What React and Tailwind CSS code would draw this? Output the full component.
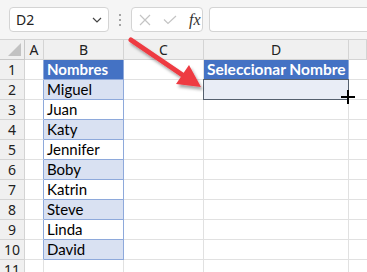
import React from 'react'

const names = ['Miguel', 'Juan', 'Katy', 'Jennifer', 'Boby', 'Katrin', 'Steve', 'Linda', 'David']

const cellFont = { fontFamily: 'Lato, "Noto Sans", sans-serif' }
const uiFont = { fontFamily: '"Noto Sans", "Open Sans", sans-serif' }

function Toolbar() {
  return (
    <div className="h-[39px] flex items-center bg-[#f5f5f5]" style={uiFont}>
      <div className="ml-[9px] w-[100px] h-[25px] bg-white border border-[#d4d4d4] rounded-[4px] flex items-center justify-between pl-[6px] pr-[6px]">
        <span className="text-[14px] text-[#222]">D2</span>
        <svg width="10" height="6" viewBox="0 0 10 6">
          <path d="M1 1 L5 5 L9 1" fill="none" stroke="#444" strokeWidth="1.2" />
        </svg>
      </div>
      <div className="w-[22px] flex flex-col items-center gap-[3px]">
        <span className="w-[2px] h-[2px] bg-[#888] rounded-full" />
        <span className="w-[2px] h-[2px] bg-[#888] rounded-full" />
        <span className="w-[2px] h-[2px] bg-[#888] rounded-full" />
      </div>
      <div className="w-[72px] h-[25px] bg-white border border-[#d4d4d4] rounded-[4px] flex items-center pl-[7px] gap-[12px]">
        <svg width="12" height="12" viewBox="0 0 12 12">
          <path d="M1 1 L11 11 M11 1 L1 11" stroke="#c4c4c4" strokeWidth="1.2" />
        </svg>
        <svg width="14" height="10" viewBox="0 0 14 10">
          <path d="M1 4.5 L5 8.5 L13 1" fill="none" stroke="#c4c4c4" strokeWidth="1.2" />
        </svg>
        <span className="text-[16px] italic text-[#333] leading-none" style={{ fontFamily: '"Liberation Serif", serif' }}>fx</span>
      </div>
      <div className="ml-[6px] flex-1 h-[25px] bg-white border border-[#d4d4d4] rounded-l-[4px] border-r-0" />
    </div>
  )
}

function Sheet() {
  const cols = ['A', 'B', 'C', 'D', '']
  const rows = Array.from({ length: 11 }, (_, i) => i + 1)
  return (
    <div className="grid grid-cols-[25px_19px_80px_80px_145px_1fr] auto-rows-[20px] border-t border-[#d4d4d4]">
      <div className="bg-[#f0f0f0] border-r border-b border-[#c8c8c8] relative">
        <svg className="absolute right-[3px] bottom-[3px]" width="13" height="13" viewBox="0 0 13 13">
          <path d="M13 0 L13 13 L0 13 Z" fill="#c2c2c2" />
        </svg>
      </div>
      {cols.map((c, i) => (
        <div key={i} className="bg-[#f0f0f0] border-r border-b border-[#d4d4d4] flex items-center justify-center text-[14px] text-[#222]" style={uiFont}>
          {c}
        </div>
      ))}
      {rows.map((r) => {
        const nameIdx = r - 2
        const even = r % 2 === 0
        let bCell
        if (r === 1) {
          bCell = (
            <div className="bg-[#4472c4] text-white font-bold border-r border-b border-[#8ea9db] pl-[3px] flex items-center text-[15px]" style={cellFont}>
              Nombres
            </div>
          )
        } else if (r <= 10) {
          bCell = (
            <div className={`${even ? 'bg-[#d9e1f2]' : 'bg-white'} border-r border-b border-[#8ea9db] pl-[3px] flex items-center text-[15px] text-black`} style={cellFont}>
              {names[nameIdx]}
            </div>
          )
        } else {
          bCell = <div className="border-r border-b border-[#e1e1e1]" />
        }
        let dCell
        if (r === 1) {
          dCell = (
            <div className="bg-[#4472c4] text-white font-bold border-r border-b border-[#8ea9db] pl-[3px] flex items-center text-[15.5px] whitespace-nowrap" style={cellFont}>
              Seleccionar Nombre
            </div>
          )
        } else if (r === 2) {
          dCell = <div className="bg-[#e9edf6] border-r border-b border-[#55606e] -mt-px -ml-px border-t border-l" />
        } else {
          dCell = <div className="border-r border-b border-[#e1e1e1]" />
        }
        return (
          <React.Fragment key={r}>
            <div className="bg-[#f0f0f0] border-r border-b border-[#d4d4d4] flex items-center justify-center text-[14px] text-[#222]" style={uiFont}>
              {r}
            </div>
            <div className={`border-r border-b ${r <= 10 ? 'border-r-[#8ea9db]' : 'border-r-[#e1e1e1]'} border-b-[#e1e1e1]`} />
            {bCell}
            <div className="border-r border-b border-[#e1e1e1]" />
            {dCell}
            <div className="border-b border-[#e1e1e1]" />
          </React.Fragment>
        )
      })}
    </div>
  )
}

export default function App() {
  return (
    <div className="w-[367px] h-[272px] overflow-hidden relative bg-white">
      <Toolbar />
      <Sheet />
      <svg className="absolute left-0 top-0 pointer-events-none" width="367" height="272" viewBox="0 0 367 272">
        <defs>
          <filter id="sh" x="-20%" y="-20%" width="140%" height="140%">
            <feDropShadow dx="2" dy="3" stdDeviation="1.8" floodColor="#000" floodOpacity="0.35" />
          </filter>
        </defs>
        <g filter="url(#sh)">
          <line x1="131" y1="40" x2="184" y2="76" stroke="#ee3b43" strokeWidth="5" strokeLinecap="round" />
          <polygon points="201,87 189,65 176,84" fill="#ee3b43" />
        </g>
        <path d="M348 90 L348 104 M341 97 L355 97" stroke="#000" strokeWidth="2" />
      </svg>
    </div>
  )
}
